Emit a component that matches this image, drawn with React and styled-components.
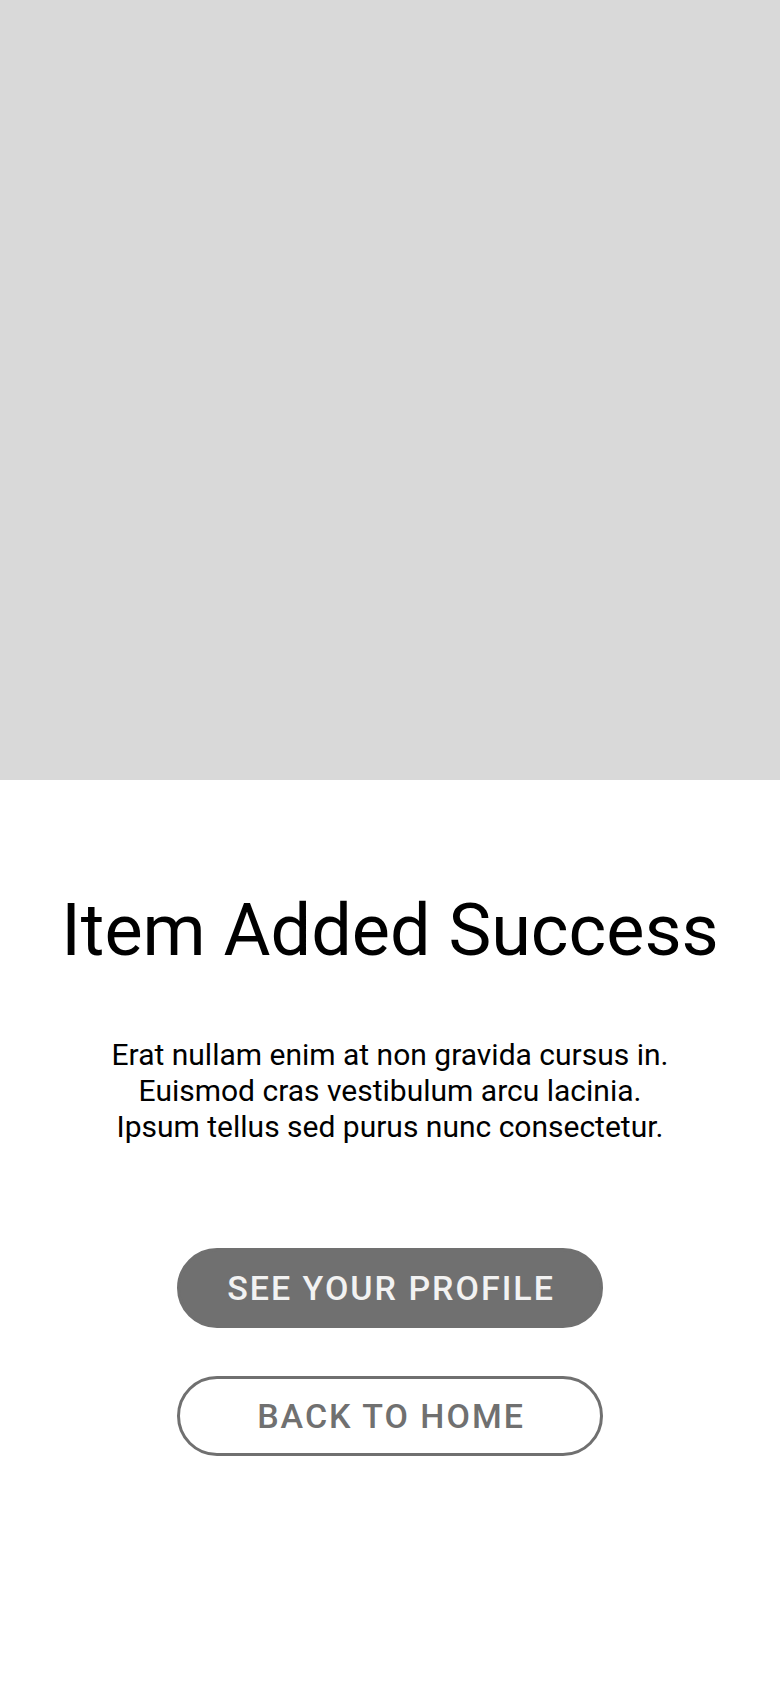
import React from "react";
import styled, { createGlobalStyle } from "styled-components";

const GlobalStyle = createGlobalStyle`
  html, body { margin: 0; padding: 0; background: #ffffff; }
  body { font-family: Roboto, "Noto Sans", sans-serif; }
  * { box-sizing: border-box; }
`;

const Page = styled.div`
  width: 780px;
  min-height: 1688px;
  display: flex;
  flex-direction: column;
  align-items: center;
  background: #ffffff;
`;

const Hero = styled.div`
  width: 100%;
  height: 780px;
  background: #d9d9d9;
`;

const Title = styled.h1`
  margin: 109px 0 0;
  font-family: Roboto, sans-serif;
  font-weight: 400;
  font-size: 72px;
  line-height: 84px;
  color: #000000;
  text-align: center;
`;

const Body = styled.p`
  margin: 64px 0 0;
  font-family: Roboto, sans-serif;
  font-weight: 400;
  font-size: 30px;
  line-height: 36px;
  color: #000000;
  text-align: center;
`;

const Actions = styled.div`
  margin-top: 103px;
  display: flex;
  flex-direction: column;
  align-items: center;
  gap: 48px;
`;

const Button = styled.button`
  width: 426px;
  height: 80px;
  border-radius: 40px;
  border: 3px solid #707070;
  background: ${(p) => (p.$filled ? "#707070" : "#ffffff")};
  color: ${(p) => (p.$filled ? "#f2f2f2" : "#707070")};
  font-family: Roboto, sans-serif;
  font-weight: 500;
  font-size: 34px;
  letter-spacing: 2px;
  text-indent: 2px;
  text-transform: uppercase;
  display: flex;
  align-items: center;
  justify-content: center;
  padding: 0;
  cursor: pointer;
`;

export default function App() {
  return (
    <>
      <GlobalStyle />
      <Page>
        <Hero />
        <Title>Item Added Success</Title>
        <Body>
          Erat nullam enim at non gravida cursus in.
          <br />
          Euismod cras vestibulum arcu lacinia.
          <br />
          Ipsum tellus sed purus nunc consectetur.
        </Body>
        <Actions>
          <Button $filled>See your profile</Button>
          <Button>Back to home</Button>
        </Actions>
      </Page>
    </>
  );
}
